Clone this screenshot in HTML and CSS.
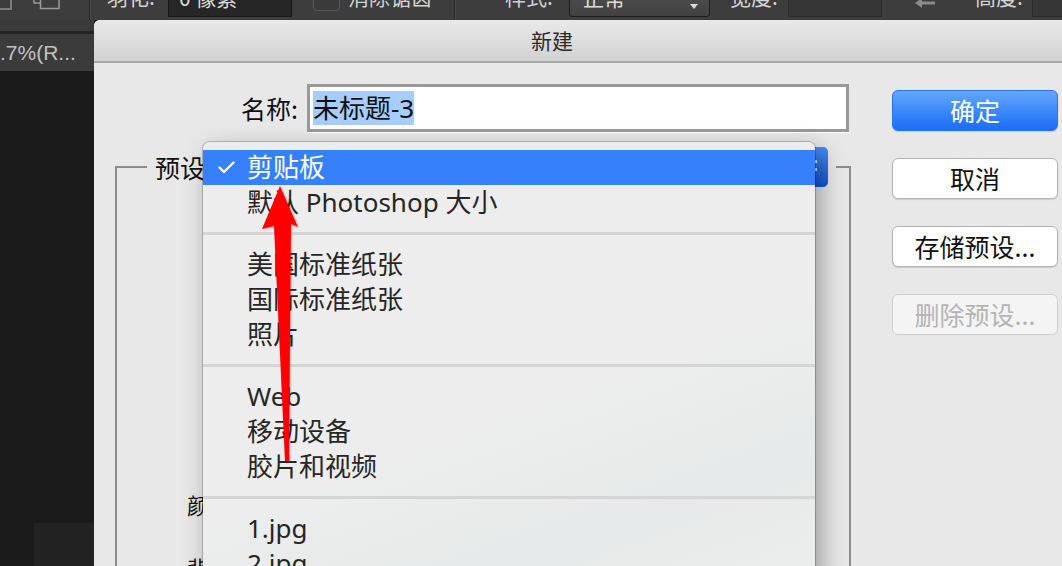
FILE: index.html
```html
<!DOCTYPE html>
<html lang="zh-CN">
<head>
<meta charset="utf-8">
<title>新建</title>
<link rel="stylesheet" href="styles.css">
</head>
<body>
<div class="app">
  <header class="toolbar">
    <div class="tb-row">
      <span class="tb-box"></span>
      <svg class="tb-shape" width="27" height="23" viewBox="0 0 27 23">
        <rect x="1" y="-4" width="18" height="20" fill="none" stroke="#9a9a9a" stroke-width="1.5"/>
        <rect x="7.5" y="2" width="18.5" height="19.5" fill="#3d3d3d" stroke="#9a9a9a" stroke-width="1.5"/>
      </svg>
      <span class="tb-sep"></span>
      <span class="tb-label l-feather">羽化:</span>
      <span class="tb-input">0 像素</span>
      <span class="tb-check"></span>
      <span class="tb-label l-anti">消除锯齿</span>
      <span class="tb-sep tight"></span>
      <span class="tb-label l-style">样式:</span>
      <span class="tb-select">正常<span class="tb-caret"></span></span>
      <span class="tb-label l-width">宽度:</span>
      <span class="tb-field f-width"></span>
      <svg class="tb-link" width="24" height="23" viewBox="0 0 24 23">
        <path d="M2 17 L9 12 L9 15.5 L22 15.5 L22 18.5 L9 18.5 L9 22 Z" fill="#8a8a8a"/>
      </svg>
      <span class="tb-label l-height">高度:</span>
      <span class="tb-field f-height"></span>
    </div>
  </header>

  <div class="workspace">
    <aside class="side">
      <div class="side-band"></div>
      <div class="side-tab">.7%(R...</div>
      <div class="side-panel"><div class="side-block"></div></div>
    </aside>

    <section class="dialog">
      <div class="titlebar">新建</div>
      <div class="dialog-body">
        <div class="form">
          <div class="name-row">
            <label class="name-label">名称:</label>
            <div class="name-input"><span class="sel">未标题-3</span></div>
          </div>
          <fieldset class="preset-group">
            <legend class="preset-legend">
              <span class="preset-label">预设:</span>
              <span class="preset-select"><span class="stepper"></span></span>
            </legend>
            <div class="fields">
              <div class="field-row"><span class="field-label">宽度:</span></div>
              <div class="field-row"><span class="field-label">高度:</span></div>
              <div class="field-row"><span class="field-label">分辨率:</span></div>
              <div class="field-row"><span class="field-label">颜色模式:</span></div>
              <div class="field-row"><span class="field-label">背景内容:</span></div>
            </div>
          </fieldset>
        </div>
        <div class="actions">
          <button class="btn primary">确定</button>
          <button class="btn">取消</button>
          <button class="btn">存储预设...</button>
          <button class="btn disabled">删除预设...</button>
        </div>
      </div>
    </section>
  </div>

  <ul class="menu">
    <li class="mi active"><span class="mark"><svg width="17" height="13" viewBox="0 0 17 13"><path d="M1.5 6.5 L6 11 L15.5 1.5" fill="none" stroke="#fff" stroke-width="2.4" stroke-linecap="round" stroke-linejoin="round"/></svg></span>剪贴板</li>
    <li class="mi"><span class="mark"></span>默认 Photoshop 大小</li>
    <li class="msep"></li>
    <li class="mi"><span class="mark"></span>美国标准纸张</li>
    <li class="mi"><span class="mark"></span>国际标准纸张</li>
    <li class="mi"><span class="mark"></span>照片</li>
    <li class="msep"></li>
    <li class="mi"><span class="mark"></span>Web</li>
    <li class="mi"><span class="mark"></span>移动设备</li>
    <li class="mi"><span class="mark"></span>胶片和视频</li>
    <li class="msep"></li>
    <li class="mi"><span class="mark"></span>1.jpg</li>
    <li class="mi"><span class="mark"></span>2.jpg</li>
  </ul>

  <svg class="annot" width="1062" height="566" viewBox="0 0 1062 566">
    <polygon points="280,186 298,227 291,224 289,461 285,461 274,226 262,229" fill="#ff0000"/>
  </svg>
</div>
</body>
</html>
```
FILE: styles.css
```css
* { box-sizing: border-box; }
html, body { margin: 0; padding: 0; }
body {
  width: 1062px;
  height: 566px;
  overflow: hidden;
  background: #1b1b1b;
  font-family: "Noto Sans", "Noto Sans CJK SC", sans-serif;
}
.app {
  position: relative;
  width: 1062px;
  height: 566px;
  overflow: hidden;
  display: flex;
  flex-direction: column;
}

/* ---------- top options bar ---------- */
.toolbar {
  height: 20px;
  flex: none;
  background: #3d3d3d;
  overflow: hidden;
}
.tb-row {
  display: flex;
  align-items: flex-start;
  height: 33px;
  margin-top: -14px;
  color: #d2d2d2;
  font-family: "Noto Sans CJK SC", sans-serif;
  font-size: 21px;
  line-height: 21px;
  white-space: nowrap;
}
.tb-box {
  flex: none;
  width: 14px;
  height: 24px;
  margin-left: -2px;
  border: 2px solid #7c7c7c;
}
.tb-shape { flex: none; margin-left: 21px; margin-top: 1px; }
.tb-sep {
  flex: none;
  width: 2px;
  height: 34px;
  margin-left: 29px;
  border-left: 1px solid #262626;
  border-right: 1px solid #4a4a4a;
}
.tb-sep.tight { margin-left: 0; }
.tb-label { flex: none; display: block; }
.l-feather { margin-left: 16px; width: 61px; }
.tb-input {
  flex: none;
  width: 124px;
  height: 31px;
  background: #262626;
  border: 1px solid #181818;
  padding-left: 10px;
  color: #dcdcdc;
}
.tb-check {
  flex: none;
  width: 27px;
  height: 25px;
  margin-left: 21px;
  background: #3a3a3a;
  border: 1px solid #575757;
  border-radius: 4px;
}
.l-anti { margin-left: 8px; width: 106px; }
.l-style { margin-left: 49px; width: 64px; }
.tb-select {
  flex: none;
  position: relative;
  width: 141px;
  height: 31px;
  padding-left: 13px;
  background: linear-gradient(#535353, #414141);
  border: 1px solid #1d1d1d;
  border-radius: 3px;
  color: #dcdcdc;
}
.tb-caret {
  position: absolute;
  right: 11px;
  top: 17px;
  width: 0;
  height: 0;
  border-left: 4px solid transparent;
  border-right: 4px solid transparent;
  border-top: 5px solid #d8d8d8;
}
.l-width { margin-left: 20px; width: 58px; }
.tb-field {
  flex: none;
  height: 31px;
  background: #363636;
  border: 1px solid #2b2b2b;
}
.f-width { width: 94px; }
.tb-link { flex: none; margin-left: 31px; }
.l-height { margin-left: 38px; width: 57px; }
.f-height { width: 40px; }

/* ---------- workspace ---------- */
.workspace {
  flex: 1;
  display: flex;
  min-height: 0;
}
.side {
  width: 94px;
  flex: none;
  display: flex;
  flex-direction: column;
  background: #1b1b1b;
}
.side-band {
  height: 14px;
  background: #3a3a3a;
  border-bottom: 3px solid #242424;
}
.side-tab {
  height: 37px;
  background: #3b3b3b;
  color: #c2c2c2;
  font-family: "Liberation Sans", sans-serif;
  font-size: 21px;
  line-height: 37px;
  white-space: nowrap;
  overflow: hidden;
}
.side-panel {
  flex: 1;
  display: flex;
  align-items: flex-end;
}
.side-block {
  margin-left: 34px;
  width: 60px;
  height: 43px;
  background: #222;
}

/* ---------- dialog ---------- */
.dialog {
  flex: 1;
  display: flex;
  flex-direction: column;
  background: #e8e8e8;
  border-top-left-radius: 6px;
  overflow: hidden;
}
.titlebar {
  height: 43px;
  flex: none;
  background: linear-gradient(#e9e9e9, #d2d2d2);
  border-bottom: 2px solid #a9a9a9;
  text-align: center;
  padding-right: 52px;
  font-family: "Noto Sans CJK SC", sans-serif;
  font-size: 21px;
  line-height: 41px;
  color: #2a2a2a;
}
.dialog-body {
  flex: 1;
  display: flex;
  gap: 41px;
  padding: 21px 4px 0 21px;
  min-height: 0;
}
.form {
  width: 736px;
  flex: none;
  display: flex;
  flex-direction: column;
}
.name-row {
  display: flex;
  align-items: center;
  height: 48px;
}
.name-label {
  width: 183px;
  margin-right: 9px;
  text-align: right;
  font-family: "Noto Sans CJK SC", sans-serif;
  font-size: 25px;
  color: #111;
}
.name-input {
  width: 542px;
  height: 48px;
  background: #fff;
  border: 3px solid #999;
  box-shadow: 0 1px 0 #fff;
  padding: 4px 0 0 3px;
}
.sel {
  display: inline-block;
  background: #a7cdfd;
  color: #111;
  font-family: "Noto Sans", "Noto Sans CJK SC", sans-serif;
  font-size: 26px;
  line-height: 34px;
  height: 34px;
}
.preset-group {
  flex: 1;
  min-width: 0;
  margin: 15px 0 0 0;
  padding: 0 0 0 30px;
  border: 2px solid #8d8d8d;
  border-bottom: none;
}
.preset-legend {
  display: flex;
  align-items: center;
  width: 689px;
  height: 40px;
  padding: 0 8px;
}
.preset-label {
  width: 64px;
  flex: none;
  font-family: "Noto Sans CJK SC", sans-serif;
  font-size: 25px;
  color: #111;
}
.preset-select {
  flex: 1;
  position: relative;
  height: 40px;
  background: #fff;
  border: 1px solid #aaa;
  border-radius: 5px;
}
.stepper {
  position: absolute;
  right: -1px;
  top: -1px;
  bottom: -1px;
  width: 16px;
  background: linear-gradient(#4690f8, #1455d6);
  border-radius: 0 5px 5px 0;
}
.stepper::before,
.stepper::after {
  content: "";
  position: absolute;
  left: 2px;
  width: 3px;
  height: 3px;
  background: #e6eeff;
}
.stepper::before { top: 13px; }
.stepper::after { top: 21px; }
.fields { padding-top: 96px; }
.field-row {
  height: 63px;
  display: flex;
  align-items: center;
}
.field-label {
  width: 134px;
  text-align: right;
  font-family: "Noto Sans CJK SC", sans-serif;
  font-size: 22px;
  color: #111;
}
.actions {
  width: 166px;
  flex: none;
  display: flex;
  flex-direction: column;
  gap: 27px;
  padding-top: 6px;
}
.btn {
  height: 41px;
  padding: 0;
  border: 1px solid #b3b3b3;
  border-radius: 6px;
  background: #fff;
  box-shadow: 0 1px 1px rgba(0, 0, 0, 0.12);
  color: #111;
  font-family: "Noto Sans CJK SC", sans-serif;
  font-size: 25px;
  line-height: 1;
}
.btn.primary {
  background: linear-gradient(#63a8fd, #1b6bf5);
  border-color: #2b72ee;
  color: #fff;
}
.btn.disabled {
  background: #f4f4f4;
  border-color: #cfcfcf;
  color: #b4b4b4;
  box-shadow: none;
}

/* ---------- popup menu ---------- */
.menu {
  position: absolute;
  left: 203px;
  top: 142px;
  width: 612px;
  height: 440px;
  margin: 0;
  padding: 8px 0 0 0;
  list-style: none;
  background: linear-gradient(160deg, #ededed 55%, #e7eaea 80%, #ececec);
  border-radius: 7px 7px 0 0;
  box-shadow: 0 0 0 1px rgba(0, 0, 0, 0.2), 6px 8px 24px rgba(0, 0, 0, 0.35);
  font-family: "Noto Sans", "Noto Sans CJK SC", sans-serif;
  font-size: 26px;
  color: #262626;
}
.mi {
  height: 35px;
  line-height: 35px;
  display: flex;
  align-items: center;
  white-space: nowrap;
}
.mi.active {
  background: #3680fb;
  color: #fff;
}
.mark {
  flex: none;
  width: 44px;
  height: 35px;
  display: flex;
  align-items: center;
  padding-left: 15px;
}
.msep {
  height: 3px;
  margin: 12px 0;
  background: #d5d5d5;
}

/* ---------- annotation ---------- */
.annot {
  position: absolute;
  left: 0;
  top: 0;
  pointer-events: none;
  filter: drop-shadow(1px 1px 1px rgba(0, 0, 0, 0.25));
}
```
